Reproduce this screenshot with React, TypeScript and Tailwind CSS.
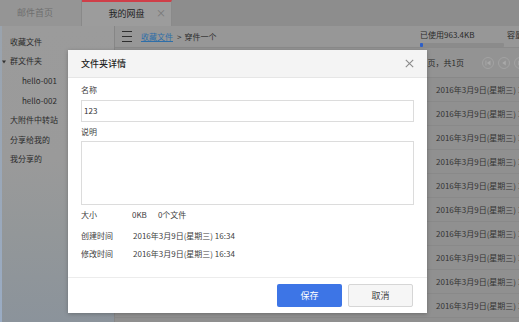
import React from "react";

function Circle({ kind }: { kind: "first" | "prev" | "next" }) {
  return (
    <div className="w-[12px] h-[12px] shrink-0 rounded-full border border-[#a3a3a3] bg-[#939393] flex items-center justify-center">
      <svg width="6" height="6" viewBox="0 0 6 6">
        {kind === "first" && (
          <>
            <rect x="0.5" y="0.5" width="0.9" height="5" fill="#a9a9a9" />
            <polygon points="5.5,0.5 5.5,5.5 1.8,3" fill="#a9a9a9" />
          </>
        )}
        {kind === "prev" && <polygon points="4.8,0.5 4.8,5.5 1.2,3" fill="#a9a9a9" />}
        {kind === "next" && <polygon points="1.2,0.5 1.2,5.5 4.8,3" fill="#a9a9a9" />}
      </svg>
    </div>
  );
}

export default function App() {
  const rows = Array.from({ length: 10 });
  const side = [
    { t: "收藏文件", pl: "pl-[10px]" },
    { t: "群文件夹", pl: "pl-[10px]", tri: true },
    { t: "hello-001", pl: "pl-[22px]" },
    { t: "hello-002", pl: "pl-[22px]" },
    { t: "大附件中转站", pl: "pl-[10px]" },
    { t: "分享给我的", pl: "pl-[10px]" },
    { t: "我分享的", pl: "pl-[10px]" },
  ];
  return (
    <div className="relative w-[519px] h-[322px] overflow-hidden bg-[#8f8f8f] text-[8px] leading-[12px] text-[#2b2b2b] font-['Noto_Sans_CJK_SC','Noto_Sans',sans-serif]">
      {/* tab bar */}
      <div className="flex h-[26px] bg-[#8d8d8d]">
        <div className="w-[82px] flex items-center pl-[17px] bg-[#959595] text-[9px] text-[#6e6e6e] border-r border-[#898989]">
          邮件首页
        </div>
        <div className="relative w-[90px] flex items-center justify-center bg-[#9c9c9c] text-[9px] text-[#222] border-t-2 border-[#cf3f49] border-r border-r-[#8a8a8a]">
          我的网盘
          <span className="absolute right-[5px] top-[5px] text-[10px] leading-[12px] text-[#767676]">×</span>
        </div>
      </div>

      <div className="flex h-[296px]">
        {/* sidebar */}
        <div className="relative w-[115px] shrink-0 border-r border-[#868686] bg-[linear-gradient(180deg,#9b9b9b_0%,#9a9a9a_45%,#939799_70%,#8b939b_100%)] pt-[6px]">
          <div className="absolute left-0 top-0 bottom-0 w-[2px] bg-[linear-gradient(180deg,#9aa3ad_0%,#9aacc4_100%)]" />
          {side.map((s) => (
            <div key={s.t} className={`relative h-[19.6px] flex items-center ${s.pl}`}>
              {s.tri && (
                <svg className="absolute left-[2px] top-[8px]" width="4" height="4" viewBox="0 0 4 4">
                  <polygon points="0,0.5 4,0.5 2,3.5" fill="#333" />
                </svg>
              )}
              {s.t}
            </div>
          ))}
        </div>

        {/* main */}
        <div className="flex-1 min-w-0 overflow-hidden flex flex-col">
          <div className="h-[22px] shrink-0 flex items-center bg-[#979797] border-b border-[#8a8a8a]">
            <div className="ml-[7px] w-[10px] flex flex-col gap-[3.5px]">
              <div className="h-[1.3px] bg-[#2e2e2e]" />
              <div className="h-[1.3px] bg-[#2e2e2e]" />
              <div className="h-[1.3px] bg-[#2e2e2e]" />
            </div>
            <span className="ml-[9px] text-[#2e6ea8] underline">收藏文件</span>
            <span className="ml-[4px]">&gt;</span>
            <span className="ml-[3px]">穿件一个</span>
            <div className="flex-1" />
            <div className="w-[99px] shrink-0 flex self-stretch overflow-hidden">
              <div className="w-[87px] shrink-0 flex flex-col pt-[3px]">
                <span className="whitespace-nowrap">已使用963.4KB</span>
                <div className="mt-[2px] h-[4px] w-[84px] bg-[#8b8b8b] rounded-[1px]">
                  <div className="h-[4px] w-[3px] bg-[#2d5fc8] rounded-[1px]" />
                </div>
              </div>
              <span className="pt-[3px] whitespace-nowrap">容量</span>
            </div>
          </div>

          <div className="h-[30px] shrink-0 flex items-center bg-[#939393] border-b border-[#888888] whitespace-nowrap">
            <span className="ml-[300px]">第1页，共1页</span>
            <div className="ml-[18px] flex gap-[4px]">
              <Circle kind="first" />
              <Circle kind="prev" />
              <Circle kind="next" />
            </div>
          </div>

          {rows.map((_, i) => (
            <div key={i} className="h-[24px] shrink-0 flex items-center border-b border-[#898989] bg-[#909090] whitespace-nowrap text-[#343434]">
              <span className="ml-[321px]">2016年3月9日(星期三) 16:34</span>
            </div>
          ))}
        </div>
      </div>

      {/* modal */}
      <div className="absolute left-[68px] top-[50px] w-[359px] h-[263px] bg-white shadow-[0_1px_4px_rgba(0,0,0,0.25)] flex flex-col">
        <div className="h-[28px] shrink-0 flex items-center justify-between px-[13px] bg-[#f4f4f4] border-b border-[#e6e6e6]">
          <span className="text-[9px] font-medium text-[#1f1f1f]">文件夹详情</span>
          <svg width="9" height="9" viewBox="0 0 9 9" className="mr-[0px]">
            <path d="M0.8 0.8 L8.2 8.2 M8.2 0.8 L0.8 8.2" stroke="#8a8a8a" strokeWidth="1.1" />
          </svg>
        </div>
        <div className="flex-1 px-[13px] pt-[6px] text-[#404040]">
          <div>名称</div>
          <div className="mt-[4px] h-[22px] border border-[#dcdcdc] flex items-center pl-[2px] text-[#333]">123</div>
          <div className="mt-[4px]">说明</div>
          <div className="mt-[3px] h-[64px] border border-[#dcdcdc]" />
          <div className="mt-[4px] flex">
            <span className="w-[51px]">大小</span>
            <span>0KB</span>
            <span className="ml-[11px]">0个文件</span>
          </div>
          <div className="mt-[9px] flex">
            <span className="w-[52px]">创建时间</span>
            <span>2016年3月9日(星期三) 16:34</span>
          </div>
          <div className="mt-[6px] flex">
            <span className="w-[52px]">修改时间</span>
            <span>2016年3月9日(星期三) 16:34</span>
          </div>
        </div>
        <div className="h-[36px] shrink-0 border-t border-[#ececec] flex items-center justify-end gap-[6px] pr-[14px]">
          <div className="w-[65px] h-[23px] rounded-[2px] bg-[#3d75e6] text-white text-[9px] flex items-center justify-center">保存</div>
          <div className="w-[65px] h-[23px] rounded-[2px] bg-[#f6f6f6] border border-[#d6d6d6] text-[#444] text-[9px] flex items-center justify-center">取消</div>
        </div>
      </div>
    </div>
  );
}
